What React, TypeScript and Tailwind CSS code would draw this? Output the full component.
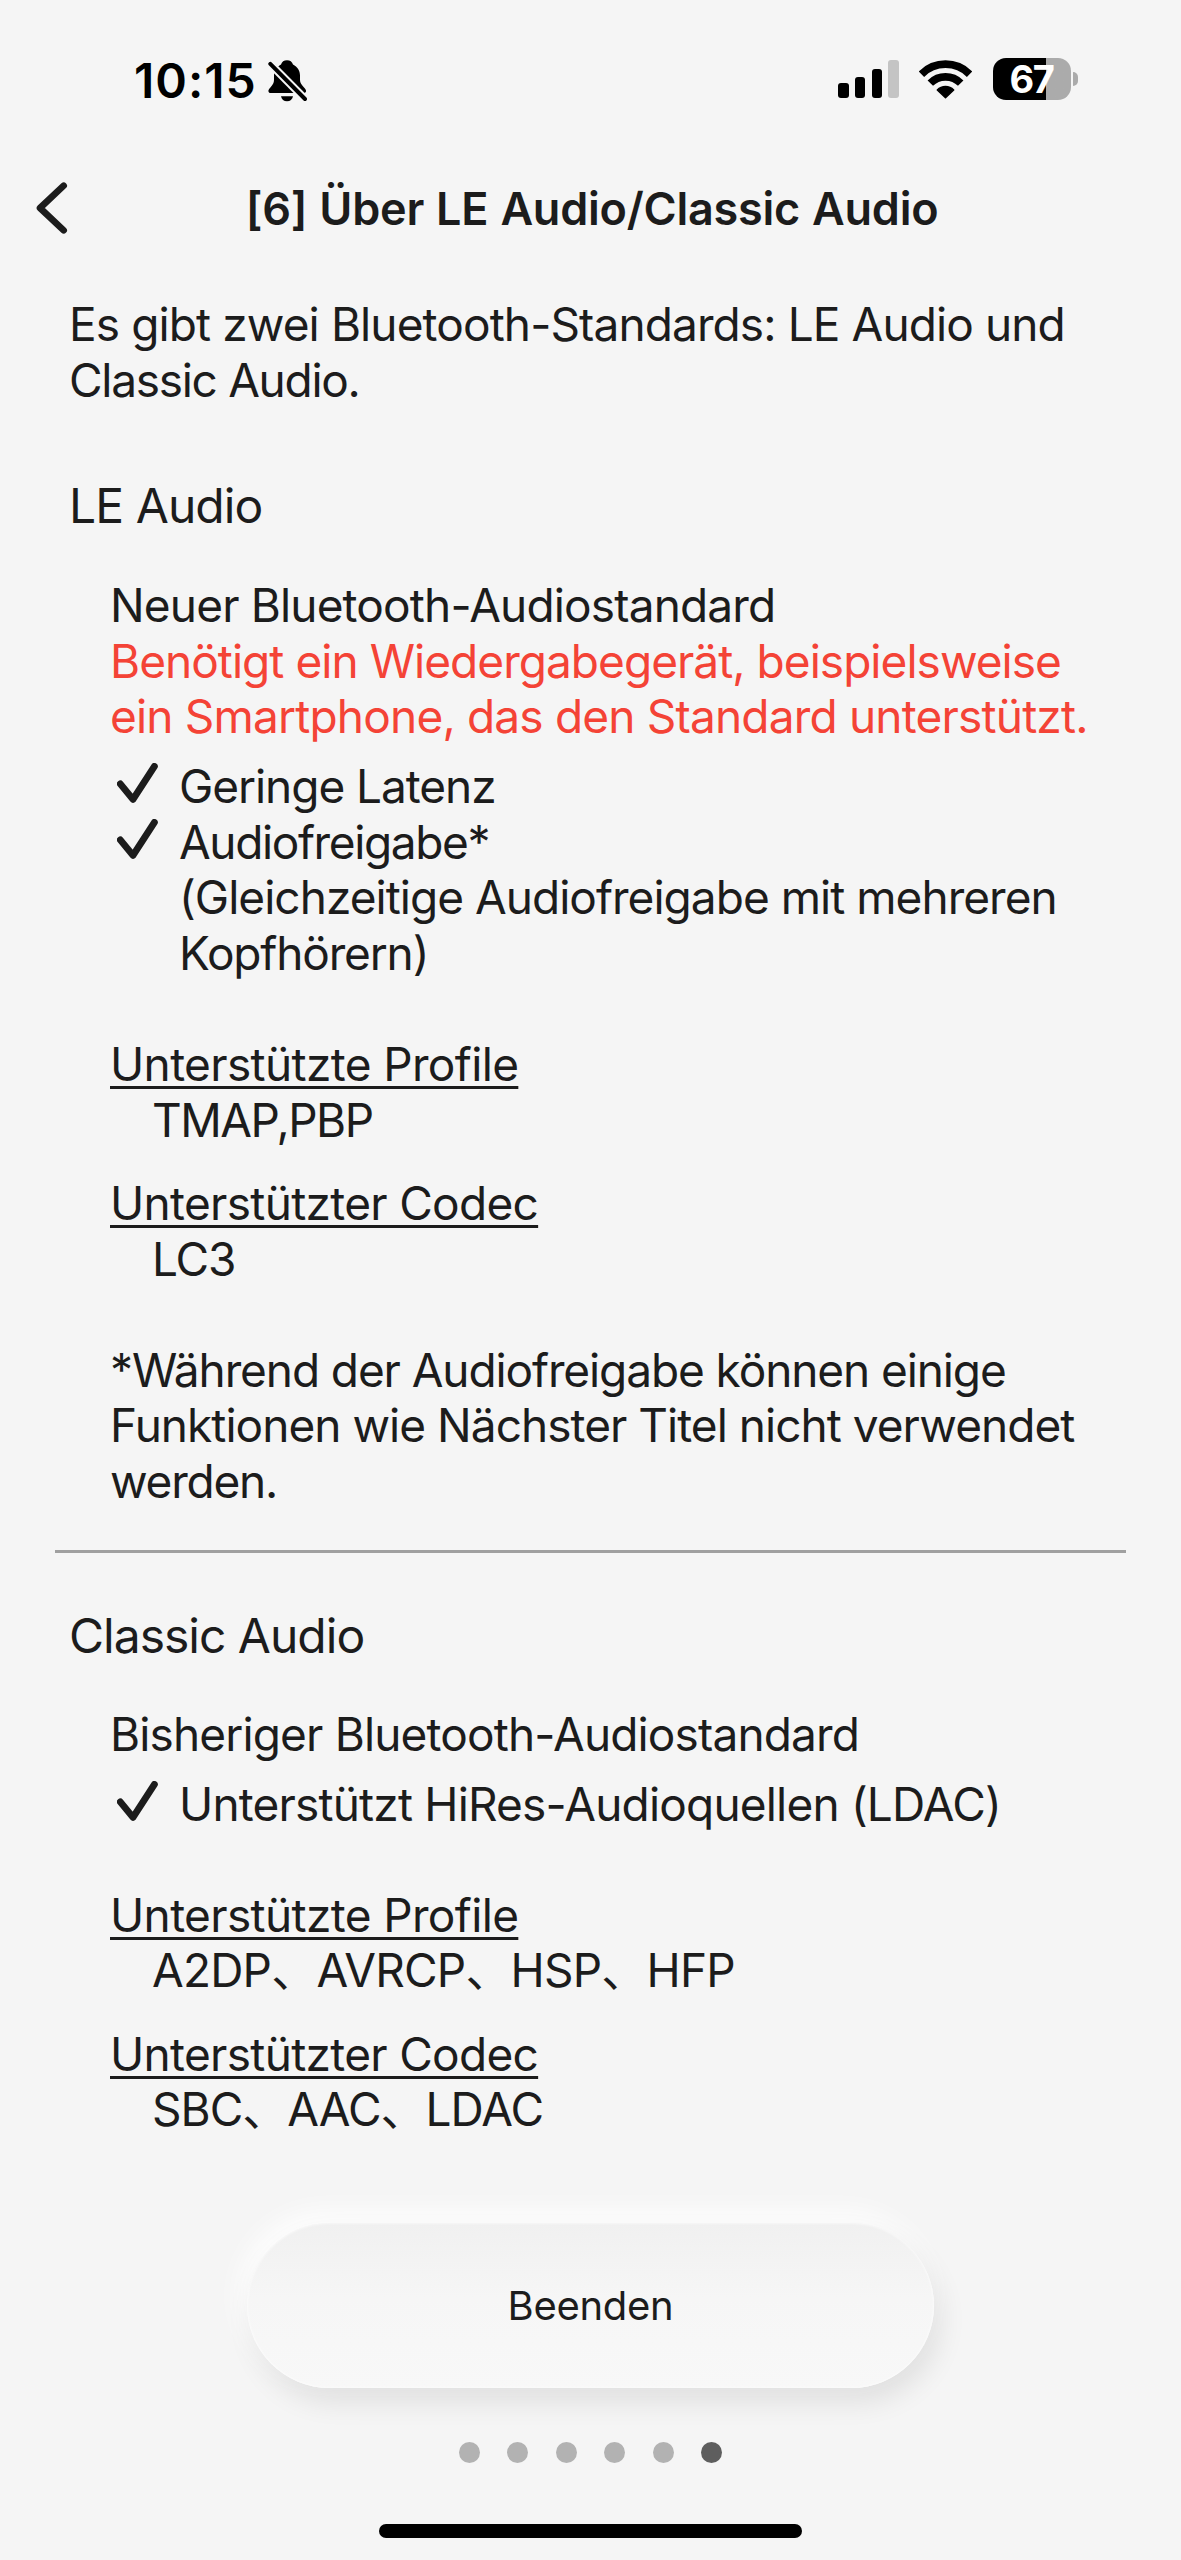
import React from 'react';

type Line = { text: string; tracking: string };

const intro: Line[] = [
  { text: 'Es gibt zwei Bluetooth-Standards: LE Audio und', tracking: 'tracking-[-0.890px]' },
  { text: 'Classic Audio.', tracking: 'tracking-[-1.290px]' },
];

const requirement: Line[] = [
  { text: 'Benötigt ein Wiedergabegerät, beispielsweise', tracking: 'tracking-[-0.960px]' },
  { text: 'ein Smartphone, das den Standard unterstützt.', tracking: 'tracking-[-0.810px]' },
];

const footnote: Line[] = [
  { text: '*Während der Audiofreigabe können einige', tracking: 'tracking-[-1.100px]' },
  { text: 'Funktionen wie Nächster Titel nicht verwendet', tracking: 'tracking-[-0.970px]' },
  { text: 'werden.', tracking: 'tracking-[-1.230px]' },
];

const TOTAL_PAGES = 6;
const CURRENT_PAGE = 5;

const Lines: React.FC<{ lines: Line[] }> = ({ lines }) => (
  <>
    {lines.map((line) => (
      <span key={line.text} className={`block ${line.tracking}`}>{line.text}</span>
    ))}
  </>
);

const BellOff = () => (
  <svg width="39" height="42" viewBox="0 0 39 42" fill="none">
    <path d="M19 .2c-3 0-5.200 1.600-6 4.200C8.600 6.600 6 10.500 6 15.500V20c0 3-1.200 4.800-3.600 7.400C1 29 .4 29.800 .4 31c0 1.300 .9 2.100 2.400 2.100h32.600c1.600 0 2.700-.8 2.700-2.100 0-1.200-.7-2-2.100-3.600-2.400-2.600-4-4.400-4-7.400v-4.500c0-5-2.600-8.900-7-11.100C24.200 1.800 22 .2 19 .2z" fill="#000" />
    <path d="M13 36.200h12c-.5 3-2.900 5-6 5s-5.500-2-6-5z" fill="#000" />
    <path d="M-1 .5L41 43" stroke="#f5f5f5" strokeWidth="8" />
    <path d="M2.300 3.800L37 39" stroke="#000" strokeWidth="4" strokeLinecap="round" />
  </svg>
);

const Signal = () => (
  <div className="flex items-end gap-[6.300px] h-[38px]">
    <div className="w-[10.300px] h-[15px] rounded-[3px] bg-black" />
    <div className="w-[10.300px] h-[21px] rounded-[3px] bg-black" />
    <div className="w-[10.300px] h-[29.500px] rounded-[3px] bg-black" />
    <div className="w-[10.300px] h-[38px] rounded-[3px] bg-[#c4c4c4]" />
  </div>
);

const Wifi = () => (
  <svg width="53" height="39" viewBox="0 0 53 39" fill="none" stroke="#000">
    <path d="M2.400 14.200A34.100 34.100 0 0 1 50.600 14.200" strokeWidth="7.700" />
    <path d="M11.300 23.100A21.500 21.500 0 0 1 41.700 23.100" strokeWidth="7.700" />
    <path d="M18.300 30A11.600 11.600 0 0 1 34.700 30L26.500 37.600Z" fill="#000" strokeWidth="1.500" strokeLinejoin="round" />
  </svg>
);

const Battery = () => (
  <div className="flex items-center gap-[2px]">
    <div className="w-[78px] h-[42px] rounded-[13px] bg-linear-to-r from-black from-68% to-[#ababab] to-68% flex items-center justify-center text-[38px] leading-[42px] font-bold tracking-[-1.500px] text-white">
      67
    </div>
    <div className="w-[5.500px] h-[14px] rounded-r-full bg-[#ababab]" />
  </div>
);

const Check = () => (
  <svg className="ml-[7px] mr-[21px] mt-[4px] shrink-0" width="41" height="40" viewBox="0 0 41 40" fill="none">
    <path d="M3.300 20.800L16 36.300L37.400 3.400" stroke="#1c1c1c" strokeWidth="6.800" strokeLinecap="round" strokeLinejoin="round" />
  </svg>
);

const Feature: React.FC<{ children: React.ReactNode }> = ({ children }) => (
  <li className="flex items-start">
    <Check />
    <div>{children}</div>
  </li>
);

const Spec: React.FC<{ label: string; labelTracking: string; value: string; valueTracking: string }> = ({
  label, labelTracking, value, valueTracking
}) => (
  <div>
    <dt className={`underline decoration-[3px] underline-offset-[5px] ${labelTracking}`}>{label}</dt>
    <dd className={`pl-[42px] ${valueTracking}`}>{value}</dd>
  </div>
);

export default function App() {
  return (
    <div className="w-[1181px] h-[2560px] overflow-hidden flex flex-col bg-[#f5f5f5] text-[#1c1c1c] font-[Inter,'Noto_Sans_CJK_JP',sans-serif] text-[46px] leading-[55.500px] whitespace-nowrap">
      {/* Status bar */}
      <div className="h-[158px] shrink-0 flex items-center justify-between pl-[134px] pr-[103px]">
        <div className="flex items-center pt-[3px] text-black">
          <span className="w-[134px] text-[48px] leading-[58px] font-semibold tracking-[1px]">10:15</span>
          <BellOff />
        </div>
        <div className="flex items-center gap-[20.500px]">
          <Signal />
          <Wifi />
          <Battery />
        </div>
      </div>

      {/* Header */}
      <header className="h-[101px] shrink-0 grid grid-cols-[70px_1fr_70px] items-center">
        <button className="pl-[36px] pb-[2px]" aria-label="Zurück">
          <svg width="32" height="52" viewBox="0 0 32 52" fill="none">
            <path d="M27.700 3.700L4 26L27.700 48.300" stroke="#1c1c1c" strokeWidth="6.600" strokeLinecap="round" strokeLinejoin="round" />
          </svg>
        </button>
        <h1 className="text-center text-[45px] leading-[54px] font-semibold tracking-[-0.250px] [word-spacing:1px] pl-[3px]">[6] Über LE Audio/Classic Audio</h1>
      </header>

      <main className="pt-[38px]">
        <p className="pl-[69px]"><Lines lines={intro} /></p>

        <section className="mt-[69px]">
          <h2 className="pl-[69px] text-[48px] leading-[58px] tracking-[-0.930px]">LE Audio</h2>
          <div className="pl-[110px] mt-[43px]">
            <p className="tracking-[-0.840px]">Neuer Bluetooth-Audiostandard</p>
            <p className="text-[#f44336]"><Lines lines={requirement} /></p>
            <ul className="mt-[14.500px]">
              <Feature>
                <span className="block tracking-[-1.050px]">Geringe Latenz</span>
              </Feature>
              <Feature>
                <span className="block tracking-[-1.380px]">Audiofreigabe*</span>
                <span className="block tracking-[-0.970px]">(Gleichzeitige Audiofreigabe mit mehreren</span>
                <span className="block tracking-[-1.160px]">Kopfhörern)</span>
              </Feature>
            </ul>
            <dl className="mt-[56px] flex flex-col gap-[28px]">
              <Spec label="Unterstützte Profile" labelTracking="tracking-[-0.640px]" value="TMAP,PBP" valueTracking="tracking-[-1.510px]" />
              <Spec label="Unterstützter Codec" labelTracking="tracking-[-0.690px]" value="LC3" valueTracking="tracking-[-1.160px]" />
            </dl>
            <p className="mt-[55.500px]"><Lines lines={footnote} /></p>
          </div>
        </section>

        <hr className="mt-[41px] mx-[55px] border-0 h-[3px] bg-[#a0a0a0]" />

        <section className="mt-[53.500px]">
          <h2 className="pl-[69px] text-[48px] leading-[58px] tracking-[-1px]">Classic Audio</h2>
          <div className="pl-[110px] mt-[42px]">
            <p className="tracking-[-0.850px]">Bisheriger Bluetooth-Audiostandard</p>
            <ul className="mt-[14.500px]">
              <Feature>
                <span className="block tracking-[-0.820px]">Unterstützt HiRes-Audioquellen (LDAC)</span>
              </Feature>
            </ul>
            <dl className="mt-[55.500px] flex flex-col gap-[28px]">
              <Spec label="Unterstützte Profile" labelTracking="tracking-[-0.640px]" value="A2DP、AVRCP、HSP、HFP" valueTracking="tracking-[-0.790px]" />
              <Spec label="Unterstützter Codec" labelTracking="tracking-[-0.690px]" value="SBC、AAC、LDAC" valueTracking="tracking-[-0.980px]" />
            </dl>
          </div>
        </section>
      </main>

      {/* Footer */}
      <footer className="mt-[85px] flex flex-col items-center">
        <button className="w-[687px] h-[165px] pt-[1px] rounded-full text-[40px] tracking-[-0.300px] bg-linear-to-b from-[#f0f0f0] via-[#f6f6f6] via-45% to-[#f8f8f8] shadow-[6px_14px_28px_rgba(0,0,0,0.09),-6px_-10px_28px_#ffffff,inset_0_0_3px_#ffffff]">
          Beenden
        </button>
        <div className="mt-[54px] flex gap-[27.500px]">
          {Array.from({ length: TOTAL_PAGES }, (_, i) => (
            <span key={i} className={`w-[21px] h-[21px] rounded-full ${i === CURRENT_PAGE ? 'bg-[#5e5e5e]' : 'bg-[#b2b2b2]'}`} />
          ))}
        </div>
        <div className="mt-[61px] w-[423px] h-[14px] rounded-full bg-black" />
      </footer>
    </div>
  );
}
